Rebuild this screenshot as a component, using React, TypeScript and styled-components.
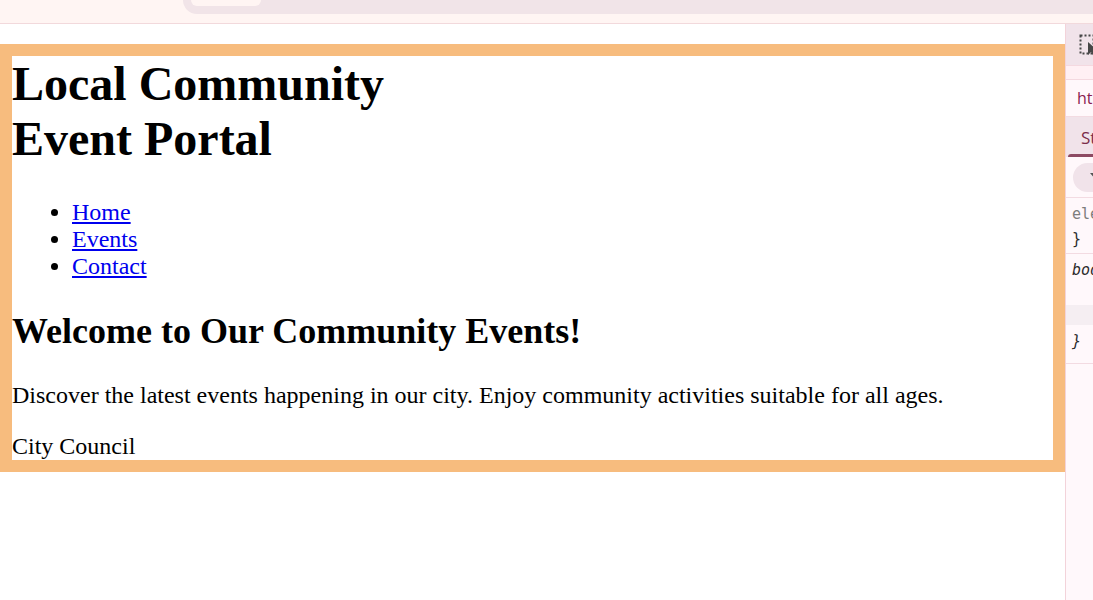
import React from 'react';
import styled, { createGlobalStyle } from 'styled-components';

const GlobalStyle = createGlobalStyle`
  html, body {
    margin: 0;
    padding: 0;
    background: #ffffff;
  }
  body {
    font-family: "Liberation Serif", "Times New Roman", serif;
  }
`;

const Window = styled.div`
  display: flex;
  flex-direction: column;
  width: 1093px;
  height: 600px;
  overflow: hidden;
`;

const ChromeBar = styled.div`
  height: 23px;
  flex-shrink: 0;
  background: #fff5f3;
  border-bottom: 1px solid #f2d9dc;
  display: flex;
  align-items: flex-start;
`;

const Omnibox = styled.div`
  flex: 1;
  margin-left: 183px;
  height: 14px;
  background: #f1e4e8;
  border-bottom-left-radius: 14px;
  display: flex;
  align-items: flex-start;
`;

const OmniChip = styled.div`
  width: 70px;
  height: 6px;
  margin-left: 8px;
  background: #fff5f3;
  border-radius: 0 0 8px 8px;
`;

const Main = styled.div`
  flex: 1;
  display: flex;
  min-height: 0;
`;

const Viewport = styled.div`
  width: 1065px;
  flex-shrink: 0;
  padding-top: 20px;
  background: #ffffff;
  box-sizing: border-box;
`;

const BodyBox = styled.div`
  border: 12px solid #f7bc7e;
  background: #ffffff;
  color: #000000;
`;

const Title = styled.h1`
  margin: 0 0 33px;
  max-width: 420px;
  font-size: 48px;
  font-weight: bold;
`;

const NavList = styled.ul`
  margin: 0 0 30px;
  padding-left: 60px;
  font-size: 24px;
  list-style: disc;
`;

const NavLink = styled.a`
  color: #0000ee;
  text-decoration: underline;
`;

const Heading = styled.h2`
  margin: 0 0 30px;
  font-size: 36px;
  font-weight: bold;
`;

const Text = styled.p<{ $last?: boolean }>`
  margin: 0 0 ${(p) => (p.$last ? '0' : '24px')};
  font-size: 24px;
`;

const DevTools = styled.aside`
  flex: 1;
  min-width: 0;
  overflow: hidden;
  border-left: 1px solid #f3d3da;
  background: #fff8fb;
  font-family: "Open Sans", "DejaVu Sans", sans-serif;
  white-space: nowrap;
`;

const ToolBar = styled.div`
  height: 41px;
  background: #f1e3ea;
  display: flex;
  align-items: center;
  padding-left: 13px;

  svg {
    flex-shrink: 0;
  }
`;

const SubBand = styled.div`
  height: 13px;
  background: #fff0f4;
  border-top: 1px solid #f4d9e0;
  border-bottom: 1px solid #f4d9e0;
`;

const Crumb = styled.div`
  height: 36px;
  display: flex;
  align-items: center;
  padding-left: 11px;
  font-size: 16px;
  color: #8a1c4f;
  border-bottom: 1px solid #f3dbe2;
`;

const TabBar = styled.div`
  height: 40px;
  background: #f1e3ea;
  position: relative;
  display: flex;
  align-items: center;
  padding-left: 15px;
  font-size: 17px;
  color: #7b2d4a;
`;

const TabLine = styled.div`
  position: absolute;
  left: 2px;
  right: -20px;
  bottom: 0;
  height: 3px;
  border-radius: 3px 3px 0 0;
  background: #8d4a63;
`;

const FilterRow = styled.div`
  height: 40px;
  display: flex;
  align-items: center;
  padding-left: 7px;
  border-bottom: 1px solid #f3dbe2;
`;

const FilterPill = styled.div`
  width: 60px;
  flex-shrink: 0;
  height: 29px;
  border-radius: 15px;
  background: #f1e3ea;
  display: flex;
  align-items: center;
  padding-left: 16px;
  box-sizing: border-box;

  svg {
    flex-shrink: 0;
  }
`;

const Rule = styled.div<{ $h: number }>`
  height: ${(p) => p.$h}px;
  border-bottom: 1px solid #f3dbe2;
  box-sizing: border-box;
  padding: 4px 0 0 6px;
`;

const Code = styled.div<{ $italic?: boolean; $muted?: boolean }>`
  font-family: "DejaVu Sans Mono", "Liberation Mono", monospace;
  font-size: 15px;
  line-height: 25px;
  font-style: ${(p) => (p.$italic ? 'italic' : 'normal')};
  color: ${(p) => (p.$muted ? '#7d7d7d' : '#2b2b2b')};
`;

const Band = styled.div`
  height: 20px;
  margin: 22px 0 4px -6px;
  background: #f5eef2;
`;

const InspectIcon = () => (
  <svg width="22" height="22" viewBox="0 0 22 22">
    <rect x="1.5" y="1.5" width="13" height="18" fill="none" stroke="#474747" strokeWidth="2" strokeDasharray="2 2" />
    <path d="M9 8 L9 21 L12 18 L14.5 22 L17 21 L14.5 17 L19 17 Z" fill="#474747" />
  </svg>
);

const FunnelIcon = () => (
  <svg width="12" height="12" viewBox="0 0 12 12">
    <path d="M1 2 H11 L7 6.5 V10 L5 11 V6.5 Z" fill="#555" />
  </svg>
);

const App: React.FC = () => {
  return (
    <Window>
      <GlobalStyle />
      <ChromeBar>
        <Omnibox>
          <OmniChip />
        </Omnibox>
      </ChromeBar>
      <Main>
        <Viewport>
          <BodyBox>
            <Title>Local Community Event Portal</Title>
            <NavList>
              <li><NavLink href="#">Home</NavLink></li>
              <li><NavLink href="#">Events</NavLink></li>
              <li><NavLink href="#">Contact</NavLink></li>
            </NavList>
            <Heading>Welcome to Our Community Events!</Heading>
            <Text>Discover the latest events happening in our city. Enjoy community activities suitable for all ages.</Text>
            <Text $last>City Council</Text>
          </BodyBox>
        </Viewport>
        <DevTools>
          <ToolBar>
            <InspectIcon />
          </ToolBar>
          <SubBand />
          <Crumb>html</Crumb>
          <TabBar>
            Styles
            <TabLine />
          </TabBar>
          <FilterRow>
            <FilterPill>
              <FunnelIcon />
            </FilterPill>
          </FilterRow>
          <Rule $h={56}>
            <Code $muted>element.style {'{'}</Code>
            <Code>{'}'}</Code>
          </Rule>
          <Rule $h={110}>
            <Code $italic>body {'{'}</Code>
            <Band />
            <Code $italic>{'}'}</Code>
          </Rule>
        </DevTools>
      </Main>
    </Window>
  );
};

export default App;
